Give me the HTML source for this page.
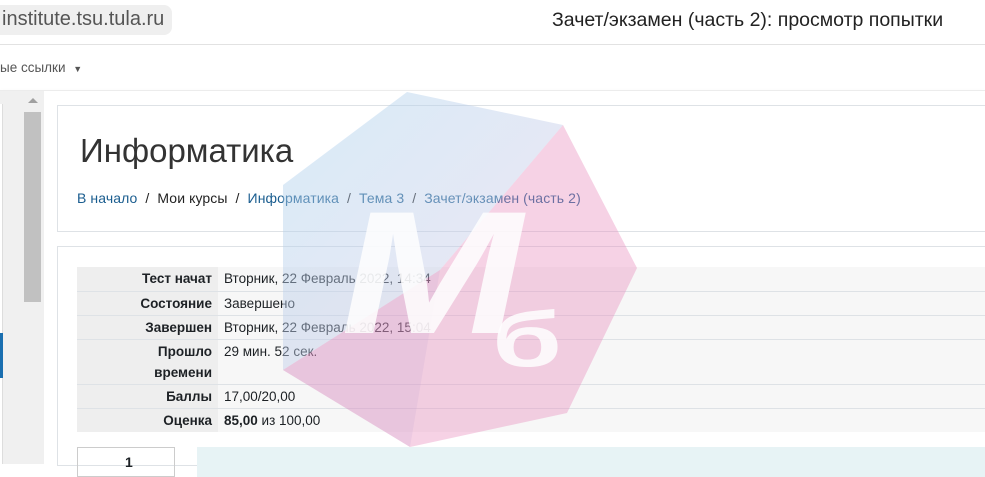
<!DOCTYPE html>
<html><head><meta charset="utf-8"><style>
*{margin:0;padding:0;box-sizing:border-box}
body{width:985px;height:464px;overflow:hidden;background:#fff;font-family:"Liberation Sans","Noto Sans CJK SC",sans-serif;color:#1d2125;position:relative}
.abs{position:absolute}
.url{left:-10px;top:5px;width:182px;height:30px;background:#efefef;border-radius:8px;font-size:20px;color:#555;padding:3px 0 0 12px}
.title{left:552px;top:9px;font-size:19.5px;color:#222}
.l1{left:0;top:44px;width:985px;height:1px;background:#e2e2e2}
.links{left:0;top:60px;font-size:13.5px;color:#555}
.nav{left:0;top:90px;width:985px;height:1px;background:#ececec;box-shadow:0 1px 3px rgba(0,0,0,.08)}
.card{border:1px solid #dee2e6;border-right:none}
td{font-size:13.5px;padding:0 6px;height:24px;border-top:1px solid #dee2e6}
td.k{background:#eeeeee;text-align:right;font-weight:bold;width:141px}
td.v{background:#f7f7f7}
</style></head><body>
<div class="abs url">institute.tsu.tula.ru</div>
<div class="abs title">Зачет/экзамен (часть 2): просмотр попытки</div>
<div class="abs l1"></div>
<div class="abs links">ые ссылки <span style="font-size:9px;margin-left:4px">▼</span></div>
<div class="abs nav"></div>
<div class="abs" style="left:0;top:91px;width:44px;height:373px;background:#f0f0f0"></div>
<div class="abs" style="left:0;top:104px;width:3px;height:360px;background:#fff;border-right:1px solid #ddd"></div>
<div class="abs" style="left:0;top:333px;width:3px;height:45px;background:#1a6fb0"></div>
<div class="abs" style="left:24px;top:112px;width:17px;height:190px;background:#c1c1c1"></div>
<div class="abs" style="left:28px;top:98px;width:0;height:0;border-left:5px solid transparent;border-right:5px solid transparent;border-bottom:5px solid #a0a0a0"></div>
<div class="abs" style="left:44px;top:91px;width:941px;height:373px;background:#fff"></div>
<div class="abs card" style="left:57px;top:105px;width:930px;height:127px"></div>
<div class="abs" style="left:80px;top:132px;font-size:33px;font-weight:300;color:#333">Информатика</div>
<div class="abs" style="left:77px;top:190px;font-size:14px;color:#222;letter-spacing:.1px"><span style="color:#1a5d8f">В начало</span> &nbsp;/&nbsp; Мои курсы &nbsp;/&nbsp; <span style="color:#1a5d8f">Информатика</span> &nbsp;/&nbsp; <span style="color:#1a5d8f">Тема 3</span> &nbsp;/&nbsp; <span style="color:#1a5d8f">Зачет/экзамен (часть 2)</span></div>
<div class="abs card" style="left:57px;top:246px;width:930px;height:220px"></div>
<table class="abs" style="left:77px;top:267px;width:908px;border-collapse:collapse">
<tr><td class="k" style="border-top:none">Тест начат</td><td class="v" style="border-top:none">Вторник, 22 Февраль 2022, 14:34</td></tr>
<tr><td class="k">Состояние</td><td class="v">Завершено</td></tr>
<tr><td class="k">Завершен</td><td class="v">Вторник, 22 Февраль 2022, 15:04</td></tr>
<tr><td class="k" style="height:45px;line-height:21px">Прошло<br>времени</td><td class="v" style="vertical-align:top;padding-top:4px">29 мин. 52 сек.</td></tr>
<tr><td class="k">Баллы</td><td class="v">17,00/20,00</td></tr>
<tr><td class="k">Оценка</td><td class="v"><b>85,00</b> из 100,00</td></tr>
</table>
<div class="abs" style="left:77px;top:447px;width:98px;height:30px;border:1px solid #ccc;font-size:14px;font-weight:bold;padding:6px 0 0 47px">1</div>
<div class="abs" style="left:197px;top:447px;width:788px;height:30px;background:#e7f3f5"></div>
<svg class="abs" style="left:0;top:0" width="985" height="464">
<defs>
<linearGradient id="g" x1="0" y1="0" x2="1" y2="1">
<stop offset="0" stop-color="#a8d2ee"/><stop offset="1" stop-color="#d8c8e4"/></linearGradient>
</defs>
<polygon points="407,92 563,125 440,270 283,370 283,185" fill="url(#g)" opacity=".45"/>
<polygon points="563,125 637,268 567,413 410,447 283,370 440,270" fill="#e98fbf" opacity=".4"/>
<polygon points="283,370 440,270 410,447" fill="#c9a6d1" opacity=".2"/>
<g transform="translate(330,333) skewX(-12)">
<text x="0" y="0" font-family="Liberation Sans" font-weight="bold" font-size="175" fill="#fff" opacity=".85" textLength="185" lengthAdjust="spacingAndGlyphs">М</text>
</g>
<text x="492" y="366" font-family="Liberation Sans" font-weight="bold" font-size="78" fill="#fff" opacity=".85" textLength="70" lengthAdjust="spacingAndGlyphs">б</text>
</svg>
</body></html>
